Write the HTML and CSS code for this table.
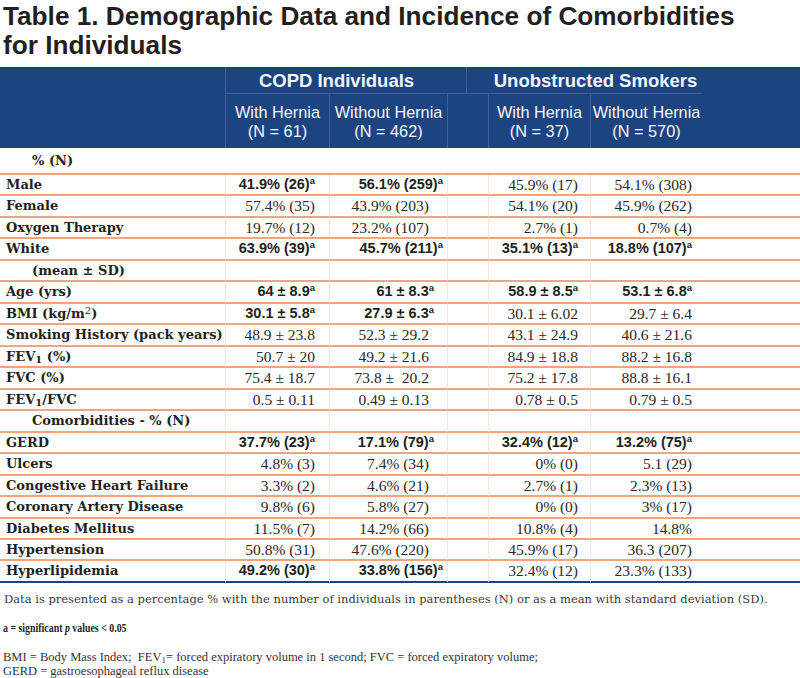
FILE: index.html
```html
<!DOCTYPE html>
<html lang="en">
<head>
<meta charset="utf-8">
<title>Table 1</title>
<link rel="stylesheet" href="styles.css">
</head>
<body>
<h1 class="title">Table 1. Demographic Data and Incidence of Comorbidities<br>for Individuals</h1>
<table class="data">
  <colgroup>
    <col class="c-label"><col class="c-1"><col class="c-2"><col class="c-ga"><col class="c-gb"><col class="c-3"><col class="c-4"><col class="c-rest">
  </colgroup>
  <thead>
    <tr class="hr1">
      <th rowspan="2" class="blank"></th>
      <th colspan="3" class="grp grp-copd">COPD Individuals</th>
      <th colspan="3" class="grp grp-uns">Unobstructed Smokers</th>
      <th rowspan="2" class="blank"></th>
    </tr>
    <tr class="hr2">
      <th class="sub">With Hernia<br>(N = 61)</th>
      <th class="sub">Without Hernia<br>(N = 462)</th>
      <th class="sub" colspan="2"></th>
      <th class="sub">With Hernia<br>(N = 37)</th>
      <th class="sub">Without Hernia<br>(N = 570)</th>
    </tr>
  </thead>
  <tbody>
    <tr class="first"><td class="lbl sec">% (N)</td><td></td><td></td><td colspan="2"></td><td></td><td></td><td></td></tr>
    <tr><td class="lbl">Male</td><td class="v1 b">41.9% (26)<sup>a</sup></td><td class="v2 b w">56.1% (259)<sup>a</sup></td><td class="gap" colspan="2"></td><td class="v3">45.9% (17)</td><td class="v4">54.1% (308)</td><td class="rest"></td></tr>
    <tr><td class="lbl">Female</td><td class="v1">57.4% (35)</td><td class="v2">43.9% (203)</td><td class="gap" colspan="2"></td><td class="v3">54.1% (20)</td><td class="v4">45.9% (262)</td><td class="rest"></td></tr>
    <tr><td class="lbl">Oxygen Therapy</td><td class="v1">19.7% (12)</td><td class="v2">23.2% (107)</td><td class="gap" colspan="2"></td><td class="v3">2.7% (1)</td><td class="v4">0.7% (4)</td><td class="rest"></td></tr>
    <tr><td class="lbl">White</td><td class="v1 b">63.9% (39)<sup>a</sup></td><td class="v2 b w">45.7% (211)<sup>a</sup></td><td class="gap" colspan="2"></td><td class="v3 b">35.1% (13)<sup>a</sup></td><td class="v4 b">18.8% (107)<sup>a</sup></td><td class="rest"></td></tr>
    <tr><td class="lbl sec">(mean ± SD)</td><td></td><td></td><td class="gap" colspan="2"></td><td></td><td></td><td class="rest"></td></tr>
    <tr><td class="lbl">Age (yrs)</td><td class="v1 b">64 ± 8.9<sup>a</sup></td><td class="v2 b">61 ± 8.3<sup>a</sup></td><td class="gap" colspan="2"></td><td class="v3 b">58.9 ± 8.5<sup>a</sup></td><td class="v4 b">53.1 ± 6.8<sup>a</sup></td><td class="rest"></td></tr>
    <tr><td class="lbl">BMI (kg/m<sup class="sq">2</sup>)</td><td class="v1 b">30.1 ± 5.8<sup>a</sup></td><td class="v2 b">27.9 ± 6.3<sup>a</sup></td><td class="gap" colspan="2"></td><td class="v3">30.1 ± 6.02</td><td class="v4">29.7 ± 6.4</td><td class="rest"></td></tr>
    <tr><td class="lbl">Smoking History (pack years)</td><td class="v1">48.9 ± 23.8</td><td class="v2">52.3 ± 29.2</td><td class="gap" colspan="2"></td><td class="v3">43.1 ± 24.9</td><td class="v4">40.6 ± 21.6</td><td class="rest"></td></tr>
    <tr><td class="lbl">FEV<sub>1</sub> (%)</td><td class="v1">50.7 ± 20</td><td class="v2">49.2 ± 21.6</td><td class="gap" colspan="2"></td><td class="v3">84.9 ± 18.8</td><td class="v4">88.2 ± 16.8</td><td class="rest"></td></tr>
    <tr><td class="lbl">FVC (%)</td><td class="v1">75.4 ± 18.7</td><td class="v2">73.8 ±&nbsp; 20.2</td><td class="gap" colspan="2"></td><td class="v3">75.2 ± 17.8</td><td class="v4">88.8 ± 16.1</td><td class="rest"></td></tr>
    <tr><td class="lbl">FEV<sub>1</sub>/FVC</td><td class="v1">0.5 ± 0.11</td><td class="v2">0.49 ± 0.13</td><td class="gap" colspan="2"></td><td class="v3">0.78 ± 0.5</td><td class="v4">0.79 ± 0.5</td><td class="rest"></td></tr>
    <tr><td class="lbl sec">Comorbidities - % (N)</td><td></td><td></td><td class="gap" colspan="2"></td><td></td><td></td><td class="rest"></td></tr>
    <tr><td class="lbl">GERD</td><td class="v1 b">37.7% (23)<sup>a</sup></td><td class="v2 b">17.1% (79)<sup>a</sup></td><td class="gap" colspan="2"></td><td class="v3 b">32.4% (12)<sup>a</sup></td><td class="v4 b">13.2% (75)<sup>a</sup></td><td class="rest"></td></tr>
    <tr><td class="lbl">Ulcers</td><td class="v1">4.8% (3)</td><td class="v2">7.4% (34)</td><td class="gap" colspan="2"></td><td class="v3">0% (0)</td><td class="v4">5.1 (29)</td><td class="rest"></td></tr>
    <tr><td class="lbl">Congestive Heart Failure</td><td class="v1">3.3% (2)</td><td class="v2">4.6% (21)</td><td class="gap" colspan="2"></td><td class="v3">2.7% (1)</td><td class="v4">2.3% (13)</td><td class="rest"></td></tr>
    <tr><td class="lbl">Coronary Artery Disease</td><td class="v1">9.8% (6)</td><td class="v2">5.8% (27)</td><td class="gap" colspan="2"></td><td class="v3">0% (0)</td><td class="v4">3% (17)</td><td class="rest"></td></tr>
    <tr><td class="lbl">Diabetes Mellitus</td><td class="v1">11.5% (7)</td><td class="v2">14.2% (66)</td><td class="gap" colspan="2"></td><td class="v3">10.8% (4)</td><td class="v4">14.8%</td><td class="rest"></td></tr>
    <tr><td class="lbl">Hypertension</td><td class="v1">50.8% (31)</td><td class="v2">47.6% (220)</td><td class="gap" colspan="2"></td><td class="v3">45.9% (17)</td><td class="v4">36.3 (207)</td><td class="rest"></td></tr>
    <tr class="last"><td class="lbl">Hyperlipidemia</td><td class="v1 b">49.2% (30)<sup>a</sup></td><td class="v2 b w">33.8% (156)<sup>a</sup></td><td class="gap" colspan="2"></td><td class="v3">32.4% (12)</td><td class="v4">23.3% (133)</td><td class="rest"></td></tr>
  </tbody>
</table>
<p class="note1">Data is presented as a percentage % with the number of individuals in parentheses (N) or as a mean with standard deviation (SD).</p>
<p class="note2"><span class="cond">a = significant <i>p</i> values &lt; 0.05</span></p>
<p class="note3">BMI = Body Mass Index;&nbsp; FEV<sub>1</sub>= forced expiratory volume in 1 second; FVC = forced expiratory volume;<br>GERD = gastroesophageal reflux disease</p>
</body>
</html>
```

FILE: styles.css
```css
html, body {
  margin: 0;
  padding: 0;
  background: #ffffff;
}
body {
  width: 800px;
  color: #231f20;
}
.title {
  margin: 0 0 6.5px 0;
  padding: 1.5px 0 0 3px;
  font-family: "Liberation Sans", Arial, sans-serif;
  font-weight: bold;
  font-size: 26.2px;
  line-height: 29.5px;
  color: #231f20;
}
.data {
  width: 800px;
  table-layout: fixed;
  border-collapse: separate;
  border-spacing: 0;
}
.c-label { width: 225px; }
.c-1 { width: 104px; }
.c-2 { width: 118px; }
.c-ga { width: 19px; }
.c-gb { width: 22px; }
.c-3 { width: 102px; }
.c-4 { width: 112px; }
.c-rest { width: 98px; }

thead th {
  background: #1c4480;
  color: #f2f5fa;
  font-family: "Liberation Sans", Arial, sans-serif;
  padding: 0;
  text-align: center;
}
.hr1 th { height: 26px; }
.grp {
  font-size: 18.5px;
  font-weight: bold;
  border-left: 1px solid #3c6198;
  border-bottom: 1px solid #3c6198;
  line-height: 25px;
}
.grp-copd { padding-right: 19px; }
.grp-uns { padding-left: 22px; }
.hr2 th { height: 52px; }
.sub {
  font-size: 16.3px;
  font-weight: normal;
  line-height: 19.5px;
  border-left: 1px solid #3c6198;
  padding-top: 2px;
}

tbody td {
  padding: 0;
  line-height: 19.47px;
  border-bottom: 2px solid #f4a37f;
  white-space: nowrap;
  text-align: right;
  font-family: "Liberation Serif", "Times New Roman", serif;
  font-size: 15.5px;
  color: #2b2728;
}
tbody tr td + td { border-left: 1px solid #fbe2d8; }
tbody td.rest { border-left: 0; }
tbody tr.first td { line-height: 25px; }
tbody tr.first td + td { border-left: 0; }
tbody tr.last td { border-bottom-color: #1c4480; }

tbody td.lbl {
  text-align: left;
  padding-left: 6px;
  font-family: "DejaVu Serif", serif;
  font-weight: bold;
  font-size: 13px;
  color: #231f20;
}
tbody td.sec { padding-left: 32px; }
.lbl sub { font-size: 10px; vertical-align: -2px; line-height: 0; }
.lbl .sq { font-size: 10px; vertical-align: 4px; line-height: 0; font-weight: normal; }

tbody td.v1 { padding-right: 14px; }
tbody td.v2 { padding-right: 18px; }
tbody td.v2.b { padding-right: 13px; }
tbody td.v2.b.w { padding-right: 4px; }
tbody td.v3 { padding-right: 12px; }
tbody td.v4 { padding-right: 10px; }

tbody td.b {
  font-family: "Liberation Sans", Arial, sans-serif;
  font-weight: bold;
  font-size: 14.5px;
  color: #231f20;
}
tbody td.b sup {
  font-size: 9.5px;
  vertical-align: 5px;
  line-height: 0;
}

.note1 {
  margin: 9px 0 0 0;
  padding-left: 4px;
  font-family: "DejaVu Serif", serif;
  font-size: 11.5px;
  line-height: 14px;
  color: #3a3a3a;
}
.note2 {
  margin: 15px 0 0 0;
  padding-left: 3px;
  font-family: "Liberation Serif", "Times New Roman", serif;
  font-weight: bold;
  font-size: 13px;
  line-height: 14px;
  color: #231f20;
}
.cond {
  display: inline-block;
  transform: scaleX(0.76);
  transform-origin: left center;
}
.note3 {
  margin: 15px 0 0 0;
  padding-left: 3px;
  font-family: "Liberation Serif", "Times New Roman", serif;
  font-size: 12.5px;
  line-height: 14px;
  color: #333333;
}
.note3 sub { font-size: 9px; vertical-align: -2px; line-height: 0; }
```
